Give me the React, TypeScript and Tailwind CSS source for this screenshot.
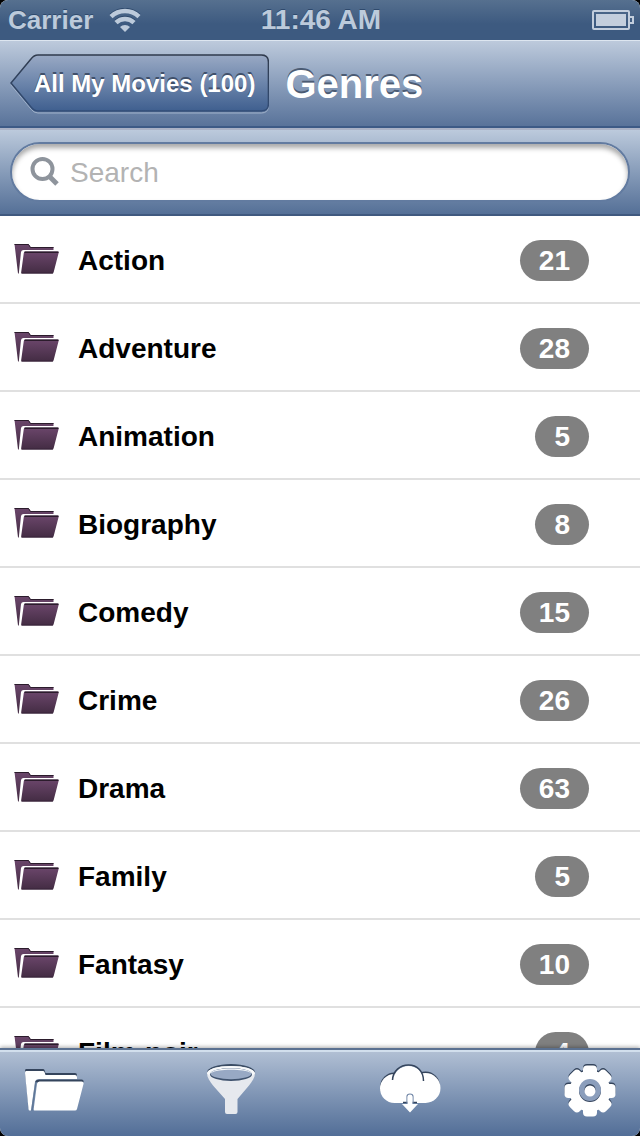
import React from "react";

const genres = [
  { name: "Action", count: 21 },
  { name: "Adventure", count: 28 },
  { name: "Animation", count: 5 },
  { name: "Biography", count: 8 },
  { name: "Comedy", count: 15 },
  { name: "Crime", count: 26 },
  { name: "Drama", count: 63 },
  { name: "Family", count: 5 },
  { name: "Fantasy", count: 10 },
  { name: "Film-noir", count: 4 },
];

function WifiIcon() {
  return (
    <svg width="32" height="24" viewBox="0 0 32 24" aria-hidden="true">
      <g fill="none" stroke="#2f4a6d" strokeWidth="4.500" transform="translate(0 -1)">
        <path d="M2 8.600a20.500 20.500 0 0 1 28 0" />
        <path d="M7 14.600a13 13 0 0 1 18 0" />
      </g>
      <g fill="none" stroke="#bccadb" strokeWidth="4.500">
        <path d="M2 8.600a20.500 20.500 0 0 1 28 0" />
        <path d="M7 14.600a13 13 0 0 1 18 0" />
      </g>
      <path d="M11 19a7.300 7.300 0 0 1 10 0L16 24z" fill="#bccadb" />
    </svg>
  );
}

function BatteryIcon() {
  return (
    <svg width="42" height="20" viewBox="0 0 42 20" role="img" aria-label="Battery full">
      <rect x="1" y="1" width="36" height="18" rx="1" fill="none" stroke="#c3cedd" strokeWidth="2" />
      <rect x="4" y="4" width="30" height="12" fill="#c3cedd" />
      <path d="M38 7h3v6h-3" fill="none" stroke="#c3cedd" strokeWidth="2" />
    </svg>
  );
}

function GenreFolderIcon() {
  return (
    <svg width="46" height="32" viewBox="0 0 46 32" aria-hidden="true">
      <defs>
        <linearGradient id="folderFill" x1="0" y1="0" x2="0" y2="1">
          <stop offset="0" stopColor="#6b466b" />
          <stop offset="1" stopColor="#432c43" />
        </linearGradient>
      </defs>
      <path d="M0.500 1H14.500L16.500 4H39.500V7H9.500Q7.500 7 7 9L4.800 30.500H4Z" fill="url(#folderFill)" />
      <path d="M0.500 1.500H14.500L16.500 4.500H39.500" fill="none" stroke="#2b1c2c" strokeWidth="1" />
      <path d="M11.500 8.500H43.500Q45 8.500 44.600 10L39.700 29Q39.400 30.500 38 30.500H8Q7 30.500 7.200 29L9.800 10Q10 8.500 11.500 8.500Z" fill="url(#folderFill)" />
      <path d="M10.500 9.300H44.500" stroke="#2b1c2c" strokeWidth="1.500" />
      <path d="M7.500 30H39" stroke="#38243a" strokeWidth="1" />
    </svg>
  );
}

const folderBack = "M2 2H19Q20 2 20.500 3L21.500 6H51Q53 6 53 8V10H15Q11.500 10 11 13L7 41.500H5.500Q4.700 41.500 4.500 40L1 4Q1 2 2 2Z";
const folderFront = "M15.500 12.500H57.500Q60 12.500 59.500 15L53 40Q52.500 41.500 51 41.500H10.500Q9.500 41.500 9.700 40L13 15Q13.400 12.500 15.500 12.500Z";

function FoldersTabIcon() {
  return (
    <svg width="60" height="44" viewBox="0 0 60 44" aria-hidden="true">
      <path d={folderBack} fill="#34445c" transform="translate(0 -2)" />
      <path d={folderBack} fill="#fff" />
      <path d="M11 13.500Q11.500 10.500 15.500 10.500H57.500Q60 10.500 59.500 13.500Z" fill="#34445c" />
      <path d={folderFront} fill="#fff" />
      <path d="M12 13L8 41.500" stroke="#5f7797" strokeWidth="1.500" />
    </svg>
  );
}

function FunnelIcon() {
  return (
    <svg width="50" height="54" viewBox="0 0 50 54" aria-hidden="true">
      <ellipse cx="24" cy="8.500" rx="24" ry="8.500" fill="#3a4c64" />
      <path d="M0 9.500C0 5 11 2 24 2S48 5 48 9.500C48 13.500 45 17.500 42 21.500L30.500 35V48Q30.500 50 28.500 50H20Q18 50 18 48V35L6 21.500C3 17.500 0 13.500 0 9.500Z" fill="#e6e9ee" />
      <path d="M0 9.500C0 5 11 2 24 2S48 5 48 9.500L45 12Q40 5.500 24 5.500T3 12Z" fill="#f7f9fb" />
      <ellipse cx="24" cy="10.500" rx="21" ry="6.500" fill="#40536e" />
      <ellipse cx="24" cy="9.700" rx="20.500" ry="5.500" fill="#98a9c4" />
      <path d="M3 9.500C5 6.500 13 4.500 24 4.500S43 6.500 45 9.500C40 6.500 33 5.800 24 5.800S8 6.500 3 9.500Z" fill="#f7f9fb" />
    </svg>
  );
}

function CloudIcon() {
  return (
    <svg width="62" height="54" viewBox="0 0 62 54" aria-hidden="true">
      <g fill="#34445c">
        <circle cx="15.500" cy="23" r="14.500" />
        <circle cx="46.500" cy="22" r="14.500" />
      </g>
      <g fill="#fff">
        <circle cx="15.500" cy="24.500" r="14.500" />
        <circle cx="46.500" cy="24" r="15" />
        <circle cx="29.500" cy="17.500" r="15.500" />
        <rect x="15" y="17" width="32" height="22" />
      </g>
      <path d="M13.500 16C14 7 21 1 29.500 1S44.500 7 44.500 17" fill="none" stroke="#34445c" strokeWidth="1.500" />
      <path d="M24 38.500H38" stroke="#34445c" strokeWidth="1.500" />
      <path d="M28 39V32.500Q28 30 31 30T34 32.500V39" fill="none" stroke="#7388a8" strokeWidth="1.200" />
      <path d="M28.600 32.500Q31 29.500 33.400 32.500V40H39L31 48.500L23 40H28.600Z" fill="#fff" />
    </svg>
  );
}

const gearAngles = [0, 45, 90, 135, 180, 225, 270, 315];

function GearShape() {
  return (
    <>
      <circle cx="26" cy="27" r="20.500" />
      {gearAngles.map((a) => (
        <rect key={a} x="19" y="1.500" width="14" height="15" rx="4" transform={`rotate(${a} 26 27)`} />
      ))}
    </>
  );
}

function GearIcon() {
  return (
    <svg width="52" height="54" viewBox="0 0 52 54" aria-hidden="true">
      <g fill="#34445c" transform="translate(0 -1.500)"><GearShape /></g>
      <g fill="#fff"><GearShape /></g>
      <circle cx="26" cy="27" r="11" fill="#34445c" />
      <circle cx="26" cy="26" r="11" fill="#8b9ebc" />
      <circle cx="26" cy="25.500" r="5.500" fill="#34445c" />
      <circle cx="26" cy="27" r="5.500" fill="#fff" />
    </svg>
  );
}

function BackShape() {
  return (
    <svg className="absolute inset-0 size-full" viewBox="0 0 260 60" preserveAspectRatio="none" aria-hidden="true">
      <defs>
        <linearGradient id="backFill" x1="0" y1="0" x2="0" y2="1">
          <stop offset="0" stopColor="#99a9c4" />
          <stop offset="0.5" stopColor="#6c85ab" />
          <stop offset="1" stopColor="#3f5f8f" />
        </linearGradient>
        <linearGradient id="backEdge" x1="0" y1="0" x2="0" y2="1">
          <stop offset="0" stopColor="#303b4d" />
          <stop offset="1" stopColor="#324d77" />
        </linearGradient>
      </defs>
      <path d="M28 1H252Q259 1 259 8V50Q259 57 252 57H28Q24 57 21 53L1 29L21 5Q24 1 28 1Z" transform="translate(0 2)" fill="none" stroke="#a1b2ca" strokeWidth="1" />
      <path d="M28 1H252Q259 1 259 8V50Q259 57 252 57H28Q24 57 21 53L1 29L21 5Q24 1 28 1Z" fill="url(#backFill)" stroke="url(#backEdge)" strokeWidth="1.500" />
    </svg>
  );
}

export default function App() {
  return (
    <div className="bg-black">
      <div className="flex h-screen flex-col overflow-hidden rounded-lg bg-white font-['Liberation_Sans',Arial,sans-serif] text-black">
        <div className="grid h-10 shrink-0 grid-cols-[1fr_auto_1fr] items-center bg-linear-to-b from-[#56708f] to-[#3d5a80] to-60% pr-1.5 pl-2 font-bold text-[#bccadb] [text-shadow:0_-1px_0_#2f4a6d]">
          <div className="flex items-center gap-4">
            <span className="text-[26px] leading-10">Carrier</span>
            <WifiIcon />
          </div>
          <time className="text-[28px] leading-10">11:46 AM</time>
          <div className="flex justify-end">
            <BatteryIcon />
          </div>
        </div>

        <header className="flex h-22 shrink-0 items-center gap-4 border-t border-b-2 border-t-[#dde6f0] border-b-[#3d5a86] bg-linear-to-b from-[#bdcadc] to-[#59739a] px-2.5">
          <button type="button" className="relative h-15 pr-3.5 pl-6 text-2xl font-bold text-white [text-shadow:0_-2px_0_#40506a]">
            <BackShape />
            <span className="relative">All My Movies (100)</span>
          </button>
          <h1 className="text-[40px] leading-12 font-bold text-white [text-shadow:0_-2px_0_#4b5b73]">Genres</h1>
        </header>

        <form role="search" className="h-22 shrink-0 border-t-2 border-b-2 border-t-[#aab2c6] border-b-[#40597f] bg-linear-to-b from-[#bccadc] to-[#557097] px-2.5 pt-3" onSubmit={(e) => e.preventDefault()}>
          <div className="flex h-15 items-center gap-2.5 rounded-full border-2 border-[#627ba0] bg-white pr-6 pl-4.5 shadow-[inset_0_4px_5px_#aaaaaa]">
            <label htmlFor="genre-search" aria-label="Search">
              <svg width="30" height="30" viewBox="0 0 30 30" fill="none" stroke="#8e949c" aria-hidden="true">
                <circle cx="12.500" cy="12" r="10" strokeWidth="4" />
                <path d="M19 19L27 27" strokeWidth="5" />
              </svg>
            </label>
            <input id="genre-search" type="search" placeholder="Search" className="h-10 min-w-0 flex-1 bg-transparent pt-0.5 text-[28px] leading-8 outline-none placeholder:text-[#b3b3b3]" />
          </div>
        </form>

        <main className="min-h-0 flex-1 overflow-y-auto [scrollbar-width:none]">
          <ul>
            {genres.map((g) => (
              <li key={g.name} className="border-b-2 border-[#e0e0e0]">
                <a href={`#${g.name}`} className="flex h-[86px] items-center pr-[51px] pl-3.5 text-[28px] leading-8 font-bold">
                  <GenreFolderIcon />
                  <span className="flex-1 pt-1 pl-[18px]">{g.name}</span>
                  <span className="mt-0.5 rounded-full bg-[#808080] px-[19px] pt-[5px] pb-1 text-white">{g.count}</span>
                </a>
              </li>
            ))}
          </ul>
        </main>

        <nav className="z-10 flex h-22 shrink-0 items-center justify-between border-t-2 border-[#5b7191] bg-linear-to-b from-[#b3c1d5] to-[#526e97] px-6 pb-1 shadow-[inset_0_2px_0_#d2dfed,0_-1px_4px_#00000055]">
          <button type="button" aria-label="Genres"><FoldersTabIcon /></button>
          <button type="button" aria-label="Filter"><FunnelIcon /></button>
          <button type="button" aria-label="Download"><CloudIcon /></button>
          <button type="button" aria-label="Settings"><GearIcon /></button>
        </nav>
      </div>
    </div>
  );
}
